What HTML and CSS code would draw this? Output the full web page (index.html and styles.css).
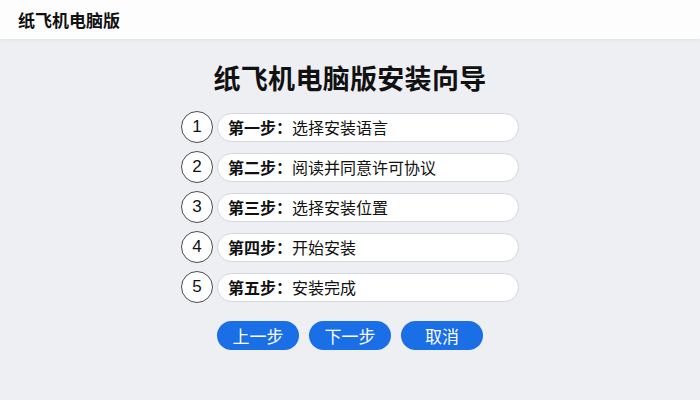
FILE: index.html
```html
<!DOCTYPE html>
<html lang="zh-CN">
<head>
    <meta charset="UTF-8">
    <meta name="viewport" content="width=device-width, initial-scale=1.0">
    <title>纸飞机电脑版安装向导</title>
    <link rel="stylesheet" href="styles.css">
</head>
<body>
    <div class="topbar">纸飞机电脑版</div>

    <div class="wizard">
        <h1>纸飞机电脑版安装向导</h1>
        <ul class="steps">
            <li><span class="num">1</span><span class="pill"><b>第一步：</b>选择安装语言</span></li>
            <li><span class="num">2</span><span class="pill"><b>第二步：</b>阅读并同意许可协议</span></li>
            <li><span class="num">3</span><span class="pill"><b>第三步：</b>选择安装位置</span></li>
            <li><span class="num">4</span><span class="pill"><b>第四步：</b>开始安装</span></li>
            <li><span class="num">5</span><span class="pill"><b>第五步：</b>安装完成</span></li>
        </ul>
        <div class="actions">
            <button>上一步</button>
            <button>下一步</button>
            <button>取消</button>
        </div>
    </div>
</body>
</html>
```

FILE: styles.css
```css
body {
    font-family: "Noto Sans CJK SC", "Noto Sans", sans-serif;
    background: #eeeff2;
    margin: 0;
    padding: 0;
    color: #111;
}
.topbar {
    height: 39px;
    line-height: 39px;
    padding-left: 18px;
    background: #fdfdfd;
    font-size: 17px;
    font-weight: bold;
    box-shadow: 0 1px 3px rgba(0, 0, 0, 0.06);
}
.wizard {
    display: flex;
    flex-direction: column;
    align-items: center;
}
h1 {
    margin: 20px 0 0;
    font-size: 27px;
    line-height: 38px;
    font-weight: bold;
    letter-spacing: 0.3px;
}
.steps {
    list-style: none;
    margin: 14px 0 0;
    padding: 0;
    display: flex;
    flex-direction: column;
    gap: 8px;
}
.steps li {
    display: flex;
    align-items: center;
    gap: 4px;
    height: 32px;
}
.num {
    box-sizing: border-box;
    width: 32px;
    height: 32px;
    border: 1.5px solid #4a4a55;
    border-radius: 50%;
    background: #fff;
    display: flex;
    align-items: center;
    justify-content: center;
    font-family: "Liberation Sans", sans-serif;
    font-size: 17px;
}
.pill {
    width: 290px;
    height: 27px;
    line-height: 27px;
    padding-left: 10px;
    border: 1px solid #d3d6e0;
    border-radius: 15px;
    background: #fff;
    font-size: 16px;
}
.pill b {
    font-weight: bold;
}
.actions {
    display: flex;
    gap: 10px;
    margin-top: 18px;
}
button {
    width: 82px;
    height: 29px;
    border: none;
    border-radius: 15px;
    background: #1a6ee6;
    color: #fff;
    font-family: "Noto Sans CJK SC", sans-serif;
    font-size: 17px;
    cursor: pointer;
}
button:hover {
    background: #1158c0;
}
```
